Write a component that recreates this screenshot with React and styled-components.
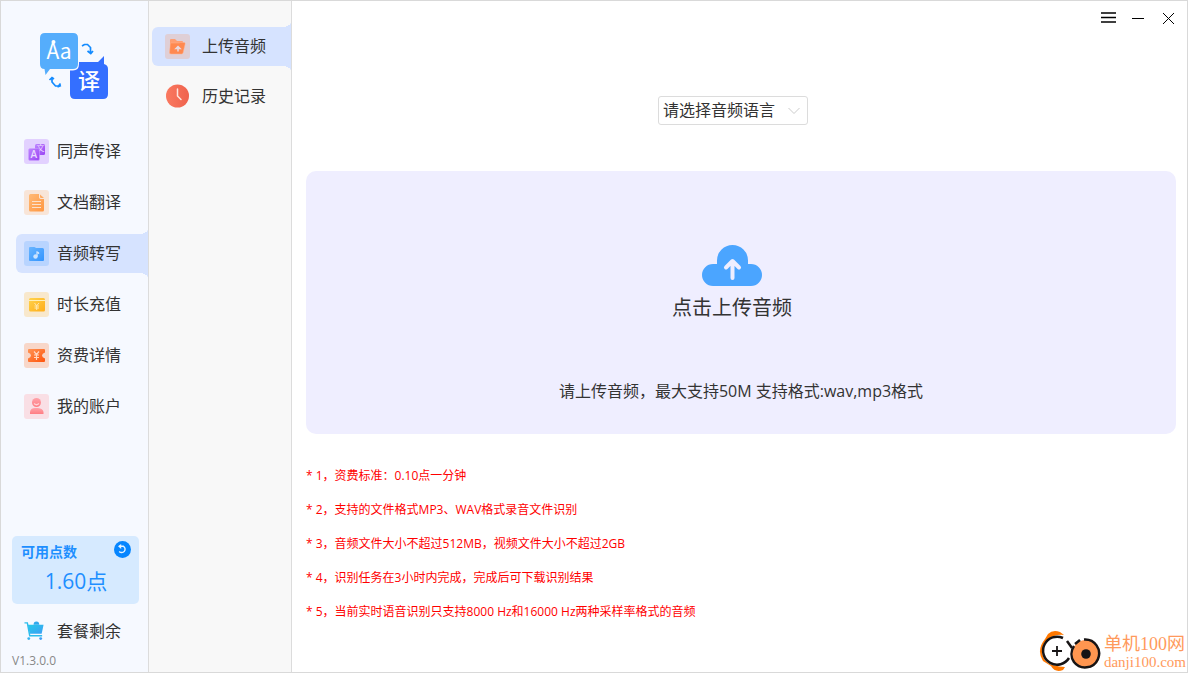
import styled, { createGlobalStyle } from "styled-components";

const GlobalStyle = createGlobalStyle`
  * {
    box-sizing: border-box;
  }
  body {
    margin: 0;
    color: #333;
    font-family: "Open Sans", "Noto Sans CJK SC", sans-serif;
    font-size: 16px;
  }
  button, select {
    font: inherit;
    color: inherit;
    background: none;
    border: 0;
    padding: 0;
    cursor: pointer;
  }
  svg {
    display: block;
    flex: none;
  }
`;

const Shell = styled.div`
  display: flex;
  min-height: 100vh;
  border: 1px solid #d9d9d9;
  background: #fff;
`;

const Sidebar = styled.aside`
  display: flex;
  flex-direction: column;
  flex: none;
  width: 148px;
  background: #f6f9ff;
  border-right: 1px solid #dcdcdc;
`;

const LogoBox = styled.div`
  padding: 28px 0 27px 37px;
  font-family: "Noto Sans CJK SC", sans-serif;
`;

const SubPanel = styled.aside`
  flex: none;
  width: 143px;
  padding-top: 26px;
  background: #f8f8f8;
  border-right: 1px solid #dcdcdc;
`;

const Menu = styled.nav`
  display: flex;
  flex-direction: column;
  gap: ${(p) => (p.$sub ? 11 : 12)}px;
  padding-left: ${(p) => (p.$sub ? 3 : 15)}px;
`;

const MenuItem = styled.a`
  position: relative;
  display: flex;
  align-items: center;
  gap: ${(p) => (p.$sub ? 12 : 8)}px;
  height: 39px;
  padding-left: ${(p) => (p.$sub ? 13 : 8)}px;
  border-radius: 6px 0 0 6px;
  color: #333;
  text-decoration: none;
  line-height: 24px;
  background: ${(p) => (p.$active ? "#d6e3ff" : "transparent")};

  &::before,
  &::after {
    content: "";
    display: ${(p) => (p.$active ? "block" : "none")};
    position: absolute;
    right: 0;
    width: 9px;
    height: 5px;
  }
  &::before {
    bottom: 100%;
    background: radial-gradient(ellipse 9px 5px at 0 0, transparent 98%, #d6e3ff);
  }
  &::after {
    top: 100%;
    background: radial-gradient(ellipse 9px 5px at 0 100%, transparent 98%, #d6e3ff);
  }
`;

const MenuLabel = styled.span`
  padding-bottom: 2px;
`;

const SidebarFoot = styled.div`
  display: flex;
  flex-direction: column;
  margin-top: auto;
  padding: 0 9px 0 11px;
`;

const PointsCard = styled.section`
  height: 68px;
  padding: 5px 8px 0 9px;
  border-radius: 5px;
  background: #d6eaff;
  color: #1e8fff;
`;

const PointsHead = styled.div`
  display: flex;
  align-items: flex-start;
  justify-content: space-between;
  height: 22px;
  font-size: 14px;
  font-weight: 700;
  line-height: 22px;
`;

const Points = styled.div`
  font-size: 21px;
  line-height: 37px;
  text-align: center;
`;

const Package = styled.a`
  display: flex;
  align-items: center;
  gap: 12px;
  height: 39px;
  margin-top: 7px;
  padding-left: 12px;
  color: #333;
  text-decoration: none;
`;

const Version = styled.small`
  color: #888;
  font-size: 12px;
  line-height: 22px;
`;

const Main = styled.main`
  flex: 1;
  min-width: 0;
  padding: 0 11px 0 14px;
`;

const WindowBar = styled.header`
  display: flex;
  justify-content: flex-end;
  gap: 14px;
  height: 32px;
  margin-right: -1px;
  align-items: center;
`;

const LanguageRow = styled.div`
  display: flex;
  justify-content: center;
  padding: 63px 16px 46px 0;
`;

const SelectBox = styled.label`
  display: flex;
  align-items: center;
  width: 150px;
  height: 29px;
  border: 1px solid #dcdcdc;
  border-radius: 3px;

  select {
    flex: 1;
    height: 27px;
    padding: 0 0 2px 4px;
    appearance: none;
    outline: none;
  }
  svg {
    margin-left: -20px;
    margin-right: 6px;
    pointer-events: none;
  }
`;

const DropZone = styled.button`
  display: flex;
  flex-direction: column;
  align-items: center;
  width: 100%;
  padding: 74px 0 31px;
  border-radius: 10px;
  background: #efeeff;
`;

const UploadPrompt = styled.span`
  display: flex;
  flex-direction: column;
  align-items: center;
  gap: 6px;
  padding-right: 18px;
  font-size: 20px;
  line-height: 30px;
`;

const UploadHint = styled.span`
  margin-top: 56px;
  line-height: 24px;
`;

const Notes = styled.ul`
  margin: 25px 0 0;
  padding: 0;
  list-style: none;
  color: #f00;
  font-size: 12px;
  line-height: 34px;
`;

const SiteMark = styled.div`
  position: absolute;
  right: 2px;
  bottom: 0;
  display: flex;
  align-items: flex-end;
  gap: 2px;
  color: #ff9a5c;
  font-family: "Liberation Serif", "Noto Sans CJK SC", serif;
`;

const MarkText = styled.div`
  padding-bottom: 2px;
  font-size: 18px;
  line-height: 18px;

  small {
    display: block;
    font-size: 15px;
  }
`;

function Logo() {
  return (
    <svg width="75" height="76" viewBox="38 29 75 76" role="img" aria-label="译">
      <path
        d="M75 62H98L104 56V64Q108 65 108 69V94Q108 99 103 99H75Q70 99 70 94V66Q70 62 75 62Z"
        fill="#346fff"
      />
      <path
        d="M45 32.500H73Q79 32.500 79 38V64Q79 70.500 73 70.500H52L45 76V70Q39 69 39 64V38Q39 32.500 45 32.500Z"
        fill="#f6f9ff"
      />
      <path
        d="M45 33H73Q78 33 78 38V64Q78 69 73 69H50L45.500 75L44.500 69Q40 69 40 64V38Q40 33 45 33Z"
        fill="#55adfc"
      />
      <circle cx="53.500" cy="42" r="2" fill="#fff" />
      <text x="46.500" y="58.500" fontSize="21" fill="#fff">
        Aa
      </text>
      <text x="78" y="88.500" fontSize="22" fontWeight="500" fill="#fff">
        译
      </text>
      <g fill="none" stroke="#138bff" strokeWidth="1.700">
        <path d="M82 46L84.500 44.500H87.500L90.500 47.500V53M87.500 51L90.800 53.500L93 51" />
        <path d="M49.500 80L52 77.500L54 79M52 77.500V82L55.500 86H58.500L60.500 83.500M57.500 87L61 85.500" />
      </g>
    </svg>
  );
}

function Tile({ bg, children }) {
  return (
    <svg width="25" height="25" viewBox="0 0 25 25" aria-hidden="true">
      <defs>
        <linearGradient id="orange" x2="1" y2="1">
          <stop stopColor="#ffba77" />
          <stop offset="1" stopColor="#ff9640" />
        </linearGradient>
        <linearGradient id="purple" x2="1" y2="1">
          <stop stopColor="#be85ff" />
          <stop offset="1" stopColor="#9945f4" />
        </linearGradient>
        <linearGradient id="blue" x2="1" y2="1">
          <stop stopColor="#69b5ff" />
          <stop offset="1" stopColor="#3194ff" />
        </linearGradient>
        <linearGradient id="gold" x2="1" y2="1">
          <stop stopColor="#ffd34d" />
          <stop offset="1" stopColor="#ffad18" />
        </linearGradient>
        <linearGradient id="red" x2="1" y2="1">
          <stop stopColor="#ff9455" />
          <stop offset="1" stopColor="#ff540c" />
        </linearGradient>
        <linearGradient id="pink" x2="0" y2="1">
          <stop stopColor="#ffa3aa" />
          <stop offset="1" stopColor="#ff7d83" />
        </linearGradient>
      </defs>
      <rect width="25" height="25" rx="3" fill={bg} />
      {children}
    </svg>
  );
}

const InterpretIcon = () => (
  <Tile bg="#e2d1ff">
    <rect x="11" y="5" width="10" height="11" rx="1.500" fill="url(#purple)" />
    <text x="12.500" y="12" fontSize="8" fill="#eadcff">
      文
    </text>
    <rect x="4.500" y="9.500" width="11" height="12" rx="1.500" fill="url(#purple)" stroke="#cda4ff" strokeWidth=".5" />
    <text x="6.500" y="19" fontSize="10" fontWeight="600" fill="#eadcff">
      A
    </text>
  </Tile>
);

const DocumentIcon = () => (
  <Tile bg="#f8e5d8">
    <path d="M6.500 4H15V7.500Q15.500 9 17 9H20V20Q20 21.500 18.500 21.500H6.500Q5 21.500 5 20V5.500Q5 4 6.500 4Z" fill="url(#orange)" />
    <path d="M16 4.500L20 8H17Q16 8 16 7Z" fill="#ffac66" />
    <path d="M8 11.500H17M8 14.500H17M8 17.500H17" stroke="#fbe1cc" strokeWidth="1.200" />
  </Tile>
);

const AudioIcon = () => (
  <Tile bg="#b8d4ff">
    <path d="M6 6H10Q11 6 12 7H18.500Q20 7 20 8.500V19Q20 20 19 20H6Q5 20 5 19V7Q5 6 6 6Z" fill="url(#blue)" />
    <circle cx="11.500" cy="15.500" r="2.200" fill="#cbe3ff" />
    <path d="M13 15.500V11Q15 11.500 14.500 13" fill="none" stroke="#cbe3ff" strokeWidth="1.300" />
  </Tile>
);

const RechargeIcon = () => (
  <Tile bg="#f8e8cc">
    <rect x="5" y="6" width="16" height="13.500" rx="1.500" fill="url(#gold)" />
    <path d="M5 8.500H21" stroke="#fff0b8" />
    <path d="M10.500 11L12.700 13.700L15 11M12.700 13.700V18M10.500 14H15M10.500 16H15" fill="none" stroke="#ffe9b1" strokeWidth="1" />
  </Tile>
);

const PriceIcon = () => (
  <Tile bg="#f8d7c9">
    <path d="M5 6H20Q21 6 21 7V9.500Q18 10.500 18 12.500T21 15.500V18Q21 19 20 19H5Q4 19 4 18V15.500Q7 14.500 7 12.500T4 9.500V7Q4 6 5 6Z" fill="url(#red)" />
    <path d="M10 8.500L12.500 11.500L15 8.500M12.500 11.500V17M10 12H15M10 14.500H15" fill="none" stroke="#ffd8c3" strokeWidth="1.200" />
  </Tile>
);

const AccountIcon = () => (
  <Tile bg="#f9dfe5">
    <circle cx="12.500" cy="8.500" r="4.500" fill="url(#pink)" />
    <path d="M10 9.500Q12.500 12 15 9.500" fill="none" stroke="#ffd3d7" strokeWidth="1.200" />
    <path d="M6 20V18Q6.500 14 11 14H14Q19 14.500 19.500 18V20Z" fill="url(#pink)" />
  </Tile>
);

const UploadIcon = () => (
  <Tile bg="#dfcfd6">
    <path d="M5 18V6Q5 5 6 5H10L12 7H17Q18 7 18 8V10Z" fill="#ff9e72" />
    <path d="M5.500 9H14L15.500 8.500H19.500Q20.500 9 20 10.500L18 19Q17.500 20 16.500 20H6Q4.500 20 4.500 18.500Z" fill="#ff8950" stroke="#ffb28e" strokeWidth=".5" />
    <path d="M13 17.500V14M11 14.500L13 12.500L15 14.500Z" fill="#ead9df" stroke="#ead9df" strokeWidth="1.500" />
  </Tile>
);

const HistoryIcon = () => (
  <svg width="25" height="25" viewBox="0 0 25 25" aria-hidden="true">
    <defs>
      <linearGradient id="clock" x2="1">
        <stop stopColor="#fa7960" />
        <stop offset="1" stopColor="#ef624d" />
      </linearGradient>
    </defs>
    <circle cx="12.500" cy="12" r="11.500" fill="url(#clock)" />
    <path d="M12.500 5V12L16 15.500" fill="none" stroke="#ffe5de" strokeWidth="1.500" strokeLinecap="round" />
  </svg>
);

const CartIcon = () => (
  <svg width="21" height="21" viewBox="0 0 22 22" aria-hidden="true">
    <defs>
      <linearGradient id="cart" x2="1" y2="1">
        <stop stopColor="#27cbe9" />
        <stop offset="1" stopColor="#3b9cf5" />
      </linearGradient>
    </defs>
    <path d="M4 5H20.500L18.500 14.500H6Z" fill="url(#cart)" />
    <path d="M10 5Q10 1.500 13 1.500T16 5Z" fill="#30a9ed" />
    <path d="M.5 3H3.500L6 16.500H19" fill="none" stroke="#2dbdec" strokeWidth="1.500" />
    <circle cx="5" cy="19.500" r="1.500" fill="#35b3ef" />
    <circle cx="17.500" cy="19.500" r="1.500" fill="#3b9cf5" />
  </svg>
);

const RefreshIcon = () => (
  <svg width="17" height="17" viewBox="0 0 17 17" aria-hidden="true">
    <circle cx="8.500" cy="8.500" r="8.500" fill="#0786ff" />
    <path d="M5.500 5.300H9.500A3.400 3.400 0 1 1 5.200 10.500" fill="none" stroke="#e6f3ff" strokeWidth="1.400" />
    <path d="M7.200 3L4 5.300L7.200 8Z" fill="#e6f3ff" />
  </svg>
);

const CloudIcon = () => (
  <svg width="60" height="42" viewBox="0 0 60 42" aria-hidden="true">
    <path
      d="M15 19V15.500A15.500 15.500 0 0 1 46 15.500V19H49A11 11 0 0 1 49 41H11A11 11 0 0 1 11 19Z"
      fill="#4ba5ff"
    />
    <path d="M30.500 33V17M24 22.500L30.500 16L37 22.500" fill="none" stroke="#efeeff" strokeWidth="4" strokeLinecap="round" strokeLinejoin="round" />
  </svg>
);

const MarkIcon = () => (
  <svg width="64" height="44" viewBox="0 0 64 44" aria-hidden="true">
    <path d="M22 3Q15 0 10 5L7 10Q-2 21 5 32L13 37Q17 44 25 41L27 38Q14 38 9 29Q4 18 10 11Q16 5 26 6Z" fill="#ff7800" />
    <circle cx="19" cy="22" r="15" fill="#fff" />
    <path d="M25 9A14 14 0 1 0 31 29M29 12L34 19" fill="none" stroke="#171415" strokeWidth="2.500" />
    <path d="M14 22H24M19 17V27" stroke="#171415" strokeWidth="1.800" />
    <circle cx="48" cy="25" r="14" fill="#ff9650" />
    <path d="M36 17A14 14 0 0 0 36 33A14 14 0 1 0 46 10.500M37 15L42 11" fill="none" stroke="#171415" strokeWidth="2.500" />
    <circle cx="48" cy="25" r="4.800" fill="#171415" />
  </svg>
);

const menu = [
  { label: "同声传译", Icon: InterpretIcon },
  { label: "文档翻译", Icon: DocumentIcon },
  { label: "音频转写", Icon: AudioIcon, active: true },
  { label: "时长充值", Icon: RechargeIcon },
  { label: "资费详情", Icon: PriceIcon },
  { label: "我的账户", Icon: AccountIcon },
];

const subMenu = [
  { label: "上传音频", Icon: UploadIcon, active: true },
  { label: "历史记录", Icon: HistoryIcon },
];

const notes = [
  "* 1，资费标准：0.10点一分钟",
  "* 2，支持的文件格式MP3、WAV格式录音文件识别",
  "* 3，音频文件大小不超过512MB，视频文件大小不超过2GB",
  "* 4，识别任务在3小时内完成，完成后可下载识别结果",
  "* 5，当前实时语音识别只支持8000 Hz和16000 Hz两种采样率格式的音频",
];

function MenuList({ items, sub }) {
  return (
    <Menu $sub={sub}>
      {items.map(({ label, Icon, active }) => (
        <MenuItem key={label} href="#" $active={active} $sub={sub}>
          <Icon />
          <MenuLabel>{label}</MenuLabel>
        </MenuItem>
      ))}
    </Menu>
  );
}

function WindowControls() {
  return (
    <WindowBar>
      <button aria-label="菜单">
        <svg width="16" height="16" viewBox="0 0 16 16">
          <path d="M0 4H15M0 8.500H15M0 13H15" stroke="#000" strokeWidth="1.500" />
        </svg>
      </button>
      <button aria-label="最小化">
        <svg width="16" height="16" viewBox="0 0 16 16">
          <path d="M1 9.500H13" stroke="#000" />
        </svg>
      </button>
      <button aria-label="关闭">
        <svg width="16" height="16" viewBox="0 0 16 16">
          <path d="M2 4L13 15M13 4L2 15" stroke="#000" />
        </svg>
      </button>
    </WindowBar>
  );
}

function App() {
  return (
    <>
      <GlobalStyle />
      <Shell>
        <Sidebar>
          <LogoBox>
            <Logo />
          </LogoBox>
          <MenuList items={menu} />
          <SidebarFoot>
            <PointsCard>
              <PointsHead>
                可用点数
                <button aria-label="刷新">
                  <RefreshIcon />
                </button>
              </PointsHead>
              <Points>1.60点</Points>
            </PointsCard>
            <Package href="#">
              <CartIcon />
              <MenuLabel>套餐剩余</MenuLabel>
            </Package>
            <Version>V1.3.0.0</Version>
          </SidebarFoot>
        </Sidebar>
        <SubPanel>
          <MenuList items={subMenu} sub />
        </SubPanel>
        <Main>
          <WindowControls />
          <LanguageRow>
            <SelectBox>
              <select aria-label="音频语言">
                <option>请选择音频语言</option>
              </select>
              <svg width="14" height="14" viewBox="0 0 14 14">
                <path d="M1.500 4L7 9.500L12.500 4" fill="none" stroke="#ccc" />
              </svg>
            </SelectBox>
          </LanguageRow>
          <DropZone>
            <UploadPrompt>
              <CloudIcon />
              点击上传音频
            </UploadPrompt>
            <UploadHint>请上传音频，最大支持50M 支持格式:wav,mp3格式</UploadHint>
          </DropZone>
          <Notes>
            {notes.map((note) => (
              <li key={note}>{note}</li>
            ))}
          </Notes>
        </Main>
      </Shell>
      <SiteMark>
        <MarkIcon />
        <MarkText>
          单机100网
          <small>danji100.com</small>
        </MarkText>
      </SiteMark>
    </>
  );
}

export default App;
